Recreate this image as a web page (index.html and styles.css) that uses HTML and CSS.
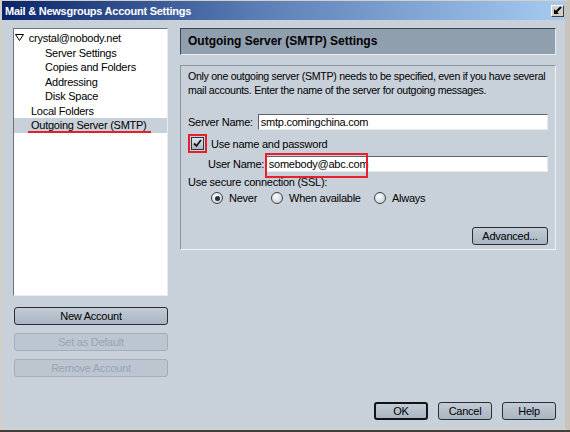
FILE: index.html
```html
<!DOCTYPE html>
<html lang="en">
<head>
  <meta charset="UTF-8">
  <title>Mail &amp; Newsgroups Account Settings</title>
  <link rel="stylesheet" href="styles.css">
</head>
<body>
  <div class="window">
    <div class="titlebar">
      <span class="title">Mail &amp; Newsgroups Account Settings</span>
      <span class="close-btn">
        <svg width="9" height="9" viewBox="0 0 9 9">
          <path d="M8 1 L2.5 6.5" stroke="#000" stroke-width="2"/>
          <path d="M1 3 L1 8 L6 8 Z" fill="#000"/>
        </svg>
      </span>
    </div>

    <div class="content">
      <div class="sidebar">
        <ul class="tree">
          <li class="account">
            <svg class="twisty" width="9" height="7" viewBox="0 0 9 7">
              <path d="M0.5 0.5 L8.5 0.5 L4.5 6.5 Z" fill="none" stroke="#000" stroke-width="1"/>
            </svg>
            crystal@nobody.net
          </li>
          <li class="sub">Server Settings</li>
          <li class="sub">Copies and Folders</li>
          <li class="sub">Addressing</li>
          <li class="sub">Disk Space</li>
          <li class="top">Local Folders</li>
          <li class="top selected"><span class="marked">Outgoing Server (SMTP)</span></li>
        </ul>

        <div class="side-buttons">
          <button class="btn">New Account</button>
          <button class="btn" disabled>Set as Default</button>
          <button class="btn" disabled>Remove Account</button>
        </div>
      </div>

      <div class="main">
        <div class="panel-head">Outgoing Server (SMTP) Settings</div>
        <div class="panel-box">
          <p class="intro">Only one outgoing server (SMTP) needs to be specified, even if you have several<br>mail accounts. Enter the name of the server for outgoing messages.</p>

          <div class="row server-row">
            <label class="lbl">Server Name:</label>
            <span class="field">smtp.comingchina.com</span>
          </div>

          <div class="row check-row">
            <span class="check-wrap">
              <span class="checkbox">
                <svg width="9" height="9" viewBox="0 0 9 9">
                  <path d="M1 4.5 L3.5 7 L8 1" fill="none" stroke="#1a1a1a" stroke-width="1.8"/>
                </svg>
              </span>
            </span>
            <span>Use name and password</span>
          </div>

          <div class="row user-row">
            <label class="lbl">User Name:</label>
            <span class="field user-field">somebody@abc.com<span class="hilite"></span></span>
          </div>

          <div class="ssl-label">Use secure connection (SSL):</div>
          <div class="radios">
            <span class="radio-opt opt-never"><span class="radio on"></span>Never</span>
            <span class="radio-opt opt-avail"><span class="radio"></span>When available</span>
            <span class="radio-opt"><span class="radio"></span>Always</span>
          </div>

          <div class="advanced-row">
            <button class="btn advanced">Advanced...</button>
          </div>
        </div>
      </div>
    </div>

    <div class="footer">
      <button class="btn default">OK</button>
      <button class="btn">Cancel</button>
      <button class="btn">Help</button>
    </div>
  </div>
</body>
</html>
```

FILE: styles.css
```css
* {
  box-sizing: border-box;
}

body {
  margin: 0;
  font-family: "Liberation Sans", Arial, sans-serif;
  font-size: 11px;
  letter-spacing: -0.25px;
  color: #000;
  background-color: #404040;
}

.window {
  width: 570px;
  height: 432px;
  display: flex;
  flex-direction: column;
  background-color: #c8d0d9;
  border-top: 1px solid #d4d0c8;
  border-left: 2px solid #d4d0c8;
  border-right: 5px solid #c8c4bc;
  border-bottom: 4px solid #d4d0c8;
  position: relative;
}

/* dark bottom edge of the frame */
.window::after {
  content: "";
  position: absolute;
  left: -2px;
  right: -5px;
  bottom: -4px;
  height: 2px;
  background-color: #404040;
}

/* title bar */
.titlebar {
  height: 19px;
  display: flex;
  align-items: center;
  justify-content: space-between;
  padding: 0 1px 0 3px;
  background: linear-gradient(to right, #0a246a, #5a7db5 45%, #a6caf0);
}

.title {
  color: #fff;
  font-weight: bold;
  font-size: 11px;
}

.close-btn {
  width: 13px;
  height: 12px;
  display: flex;
  align-items: center;
  justify-content: center;
  background-color: #d4d0c8;
  border: 1px solid;
  border-color: #fff #404040 #404040 #fff;
}

/* main area */
.content {
  display: flex;
  gap: 12px;
  padding: 8px 9px 0 11px;
}

.sidebar {
  width: 156px;
  display: flex;
  flex-direction: column;
}

.tree {
  list-style: none;
  margin: 0;
  padding: 2px 0 0 0;
  height: 268px;
  background-color: #fff;
  border: 1px solid;
  border-color: #6a7380 #e8ecf0 #e8ecf0 #6a7380;
}

.tree li {
  height: 14.5px;
  line-height: 14px;
  white-space: nowrap;
}

.tree .account {
  padding-left: 1px;
}

.twisty {
  margin-right: 2px;
  vertical-align: 1px;
}

.tree .sub {
  padding-left: 31px;
}

.tree .top {
  padding-left: 17px;
}

.tree .selected {
  height: 15px;
  padding-left: 14px;
  background-color: #c8d0d9;
}

.marked {
  display: inline-block;
  border-bottom: 2px solid #e0202a;
  line-height: 12px;
  padding: 0 4px 0 3px;
}

.side-buttons {
  display: flex;
  flex-direction: column;
  gap: 8px;
  margin-top: 11px;
  padding-left: 1px;
}

/* buttons */
.btn {
  font-family: inherit;
  font-size: 11px;
  letter-spacing: inherit;
  height: 18px;
  padding: 0;
  color: #000;
  border: 1px solid #2a2e34;
  border-radius: 3px;
  background: linear-gradient(#c2cbd6, #a9b5c3);
}

.btn:disabled {
  color: #98a4b2;
  border-color: #a3aebb;
  background: #bcc6d1;
}

.main {
  width: 376px;
  display: flex;
  flex-direction: column;
  gap: 10px;
}

.panel-head {
  height: 27px;
  line-height: 25px;
  padding-left: 7px;
  font-weight: bold;
  font-size: 12px;
  letter-spacing: 0;
  background-color: #909fae;
  border: 1px solid;
  border-color: #3c4450 #e8ecf0 #e8ecf0 #3c4450;
}

.panel-box {
  height: 185px;
  padding: 3px 7px 0 7px;
  border: 1px solid;
  border-color: #8a95a3 #eef1f4 #eef1f4 #8a95a3;
}

.intro {
  margin: 0;
  line-height: 14px;
  font-size: 10.6px;
  letter-spacing: -0.3px;
  white-space: nowrap;
}

.row {
  display: flex;
  align-items: center;
}

.lbl {
  white-space: nowrap;
}

.field {
  height: 16px;
  line-height: 14px;
  padding-left: 2px;
  background-color: #fff;
  border: 1px solid;
  border-color: #5a6470 #e8ecf0 #e8ecf0 #5a6470;
  position: relative;
}

.server-row {
  margin-top: 17px;
}

.server-row .lbl {
  width: 70px;
}

.server-row .field {
  width: 291px;
}

.check-row {
  margin-top: 4px;
  height: 19px;
}

.check-wrap {
  width: 19px;
  height: 19px;
  display: flex;
  align-items: center;
  justify-content: center;
  border: 2px solid #e8202c;
  margin-right: 4px;
}

.checkbox {
  width: 13px;
  height: 13px;
  display: flex;
  align-items: center;
  justify-content: center;
  background: linear-gradient(#dfe5ec, #a9b5c3);
  border: 1px solid #2f3640;
}

.user-row {
  margin-top: 3px;
  padding-left: 20px;
}

.user-row .lbl {
  width: 58px;
}

.user-row .field {
  width: 283px;
}

/* red outline over the user name */
.hilite {
  position: absolute;
  left: -2px;
  top: -4px;
  width: 103px;
  height: 25px;
  border: 2px solid #e8202c;
}

.ssl-label {
  margin-top: 3px;
  height: 14px;
  line-height: 14px;
}

.radios {
  display: flex;
  padding-left: 23px;
  margin-top: 1px;
  height: 16px;
  align-items: center;
}

.radio-opt {
  display: flex;
  align-items: center;
}

.opt-never {
  width: 60px;
}

.opt-avail {
  width: 103px;
}

.radio {
  width: 12px;
  height: 12px;
  border-radius: 50%;
  border: 1px solid #3a424c;
  background: radial-gradient(circle at 40% 35%, #ffffff, #b9c4d0);
  margin-right: 6px;
  display: flex;
  align-items: center;
  justify-content: center;
}

.radio.on::after {
  content: "";
  width: 5px;
  height: 5px;
  border-radius: 50%;
  background-color: #2a2f36;
}

.advanced-row {
  display: flex;
  justify-content: flex-end;
  margin-top: 21px;
}

.advanced {
  width: 76px;
  height: 18px;
}

/* dialog buttons */
.footer {
  margin-top: auto;
  display: flex;
  justify-content: flex-end;
  gap: 10px;
  padding: 0 9px 8px 0;
}

.footer .btn {
  width: 54px;
  height: 18px;
}

.footer .default {
  border: 2px solid #101418;
}
```
